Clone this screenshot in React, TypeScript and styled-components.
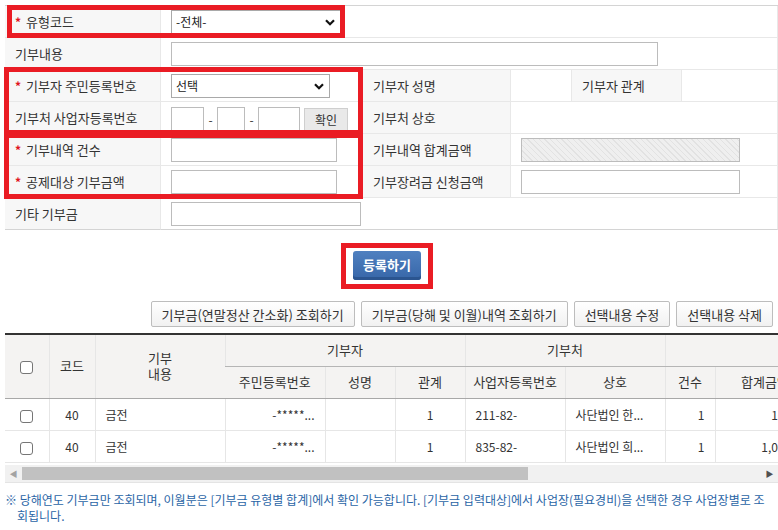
import styled, { createGlobalStyle } from 'styled-components';

const GlobalStyle = createGlobalStyle`
  html, body {
    margin: 0;
    padding: 0;
    background: #fff;
    overflow: hidden;
  }
  body {
    font-family: 'Noto Sans CJK KR', 'Noto Sans', sans-serif;
    font-size: 12px;
    color: #333;
  }
  * {
    box-sizing: border-box;
  }
`;

type Row = {
  code: string;
  kind: string;
  rrn: string;
  rel: string;
  bizNo: string;
  bizName: string;
  count: string;
  amount: string;
};

const rows: Row[] = [
  { code: '40', kind: '금전', rrn: '-*****...', rel: '1', bizNo: '211-82-', bizName: '사단법인 한...', count: '1', amount: '100,000' },
  { code: '40', kind: '금전', rrn: '-*****...', rel: '1', bizNo: '835-82-', bizName: '사단법인 희...', count: '1', amount: '1,000,000' },
];

// 그리드 컬럼 폭 (화면 밖으로 넘어가는 컬럼 포함)
const colWidths = [44, 46, 130, 100, 70, 70, 100, 100, 50, 100, 110, 210];
const tableWidth = colWidths.reduce((a, b) => a + b, 0);

function Chevron() {
  return (
    <ChevronIcon width="10" height="7" viewBox="0 0 10 7">
      <path d="M1 1.2 L5 5.2 L9 1.2" fill="none" stroke="#111" strokeWidth="2.2" />
    </ChevronIcon>
  );
}

function Select({ width, value }: { width: number; value: string }) {
  return (
    <SelectWrap width={width}>
      <SelectBox defaultValue={value}>
        <option>{value}</option>
      </SelectBox>
      <Chevron />
    </SelectWrap>
  );
}

export default function App() {
  return (
    <>
      <GlobalStyle />
      <Page>
        <FormGrid>
          <Label>
            <Req>*</Req>유형코드
          </Label>
          <Cell span={5}>
            <Select width={170} value="-전체-" />
          </Cell>

          <Label>기부내용</Label>
          <Cell span={5}>
            <TextInput width={487} />
          </Cell>

          <Label>
            <Req>*</Req>기부자 주민등록번호
          </Label>
          <Cell>
            <Select width={159} value="선택" />
          </Cell>
          <Label>기부자 성명</Label>
          <Cell />
          <Label>기부자 관계</Label>
          <Cell />

          <Label>기부처 사업자등록번호</Label>
          <Cell>
            <BizNoGroup>
              <TextInput width={33} />
              <Dash>-</Dash>
              <TextInput width={28} />
              <Dash>-</Dash>
              <TextInput width={42} />
              <ConfirmButton>확인</ConfirmButton>
            </BizNoGroup>
          </Cell>
          <Label>기부처 상호</Label>
          <Cell span={3} />

          <Label>
            <Req>*</Req>기부내역 건수
          </Label>
          <Cell>
            <TextInput width={166} />
          </Cell>
          <Label>기부내역 합계금액</Label>
          <Cell span={3}>
            <HatchedInput />
          </Cell>

          <Label>
            <Req>*</Req>공제대상 기부금액
          </Label>
          <Cell>
            <TextInput width={166} />
          </Cell>
          <Label>기부장려금 신청금액</Label>
          <Cell span={3}>
            <TextInput width={219} />
          </Cell>

          <Label last>기타 기부금</Label>
          <Cell span={5} last>
            <TextInput width={190} />
          </Cell>

          <Highlight row="1 / 2" col="1 / 3" inset="-1px 18px 0 2px" />
          <Highlight row="3 / 5" col="1 / 3" inset="-3px 0 -1px -1px" />
          <Highlight row="5 / 7" col="1 / 3" inset="-1px 0 -1px -1px" />
        </FormGrid>

        <SubmitArea>
          <SubmitFrame>
            <SubmitButton>등록하기</SubmitButton>
          </SubmitFrame>
        </SubmitArea>

        <Toolbar>
          <ToolButton>기부금(연말정산 간소화) 조회하기</ToolButton>
          <ToolButton>기부금(당해 및 이월)내역 조회하기</ToolButton>
          <ToolButton>선택내용 수정</ToolButton>
          <ToolButton>선택내용 삭제</ToolButton>
        </Toolbar>

        <GridViewport>
          <Table style={{ width: tableWidth }}>
            <colgroup>
              {colWidths.map((w, i) => (
                <col key={i} width={w} />
              ))}
            </colgroup>
            <thead>
              <tr>
                <Th rowSpan={2}>
                  <Check />
                </Th>
                <Th rowSpan={2}>코드</Th>
                <Th rowSpan={2}>
                  기부
                  <br />
                  내용
                </Th>
                <Th colSpan={3} group>
                  기부자
                </Th>
                <Th colSpan={2} group>
                  기부처
                </Th>
                <Th colSpan={4} group>
                  기부금액
                </Th>
              </tr>
              <tr>
                <Th>주민등록번호</Th>
                <Th>성명</Th>
                <Th>관계</Th>
                <Th>사업자등록번호</Th>
                <Th>상호</Th>
                <Th>건수</Th>
                <Th>합계금액</Th>
                <Th>공제대상금액</Th>
                <Th>기부장려금</Th>
              </tr>
            </thead>
            <tbody>
              {rows.map((r, i) => (
                <tr key={i}>
                  <Td align="center">
                    <Check />
                  </Td>
                  <Td align="center">{r.code}</Td>
                  <Td align="left">{r.kind}</Td>
                  <Td align="right">{r.rrn}</Td>
                  <Td align="center" />
                  <Td align="center">{r.rel}</Td>
                  <Td align="left">{r.bizNo}</Td>
                  <Td align="left">{r.bizName}</Td>
                  <Td align="right">{r.count}</Td>
                  <Td align="right" tight>
                    {r.amount}
                  </Td>
                  <Td align="right">{r.amount}</Td>
                  <Td align="right">0</Td>
                </tr>
              ))}
            </tbody>
          </Table>
        </GridViewport>

        <ScrollBar>
          <ScrollArrow>◀</ScrollArrow>
          <ScrollTrack>
            <ScrollThumb style={{ width: `${(773 / tableWidth) * 100}%` }} />
          </ScrollTrack>
          <ScrollArrow dark>▶</ScrollArrow>
        </ScrollBar>

        <Note>
          ※ 당해연도 기부금만 조회되며, 이월분은 [기부금 유형별 합계]에서 확인 가능합니다. [기부금 입력대상]에서
          사업장(필요경비)을 선택한 경우 사업장별로 조회됩니다.
        </Note>
      </Page>
    </>
  );
}

const Page = styled.div`
  padding: 5px 0 0 5px;
  width: 778px;
`;

const FormGrid = styled.div`
  position: relative;
  display: grid;
  grid-template-columns: 156px 202px 148px 61px 110px 1fr;
  grid-auto-rows: 32px;
  border-top: 1px solid #d4d4d4;
`;

const Label = styled.div<{ last?: boolean }>`
  display: flex;
  align-items: center;
  padding-left: 10px;
  background: #f7f7f7;
  border-bottom: 1px solid ${({ last }) => (last ? '#d4d4d4' : '#e8e8e8')};
  border-right: 1px solid #e8e8e8;
  color: #333;
  font-size: 13px;
  white-space: nowrap;
`;

const Req = styled.span`
  color: #e0141e;
  font-weight: bold;
  font-size: 12px;
  margin-right: 5px;
`;

const Cell = styled.div<{ span?: number; last?: boolean }>`
  grid-column: span ${({ span }) => span ?? 1};
  display: flex;
  align-items: center;
  padding-left: 10px;
  border-bottom: 1px solid ${({ last }) => (last ? '#d4d4d4' : '#e8e8e8')};
  border-right: 1px solid #e8e8e8;
`;

const Highlight = styled.div<{ row: string; col: string; inset: string }>`
  position: absolute;
  grid-row: ${({ row }) => row};
  grid-column: ${({ col }) => col};
  inset: ${({ inset }) => inset};
  border: 5px solid #ea1c24;
  pointer-events: none;
`;

const SelectWrap = styled.div<{ width: number }>`
  position: relative;
  width: ${({ width }) => width}px;
  height: 24px;
`;

const SelectBox = styled.select`
  appearance: none;
  width: 100%;
  height: 100%;
  border: 1px solid #a9a9a9;
  background: #fff;
  padding: 0 4px;
  font-family: inherit;
  font-size: 12px;
  color: #222;
`;

const ChevronIcon = styled.svg`
  position: absolute;
  right: 6px;
  top: 9px;
  pointer-events: none;
`;

const TextInput = styled.input<{ width: number }>`
  width: ${({ width }) => width}px;
  height: 24px;
  border: 1px solid #bcbcbc;
  background: #fff;
  padding: 0 4px;
  font-family: inherit;
`;

const HatchedInput = styled.div`
  width: 219px;
  height: 24px;
  border: 1px solid #bcbcbc;
  background: repeating-linear-gradient(45deg, #efefef 0 3px, #e2e2e2 3px 4px);
`;

const BizNoGroup = styled.div`
  display: flex;
  align-items: center;
  height: 26px;
  margin-top: 4px;
  & > input {
    height: 26px;
  }
`;

const Dash = styled.span`
  width: 13px;
  text-align: center;
  color: #333;
`;

const ConfirmButton = styled.button`
  margin-left: 4px;
  width: 44px;
  height: 24px;
  border: 1px solid #cfcfcf;
  background: #e9e9e9;
  font-family: inherit;
  font-size: 12px;
  color: #333;
  padding: 0;
`;

const SubmitArea = styled.div`
  display: flex;
  justify-content: center;
  padding: 13px 0 0 0;
  margin-left: -9px;
`;

const SubmitFrame = styled.div`
  border: 5px solid #ea1c24;
  padding: 3px 7px 4px 7px;
`;

const SubmitButton = styled.button`
  width: 68px;
  height: 29px;
  border: none;
  border-radius: 3px;
  background: linear-gradient(#4f80c0, #3766a8);
  box-shadow: inset 0 -3px 0 #2b5590;
  color: #fff;
  font-family: inherit;
  font-size: 13px;
  font-weight: bold;
  padding: 0 0 2px;
`;

const Toolbar = styled.div`
  display: flex;
  justify-content: flex-end;
  gap: 6px;
  padding: 12px 5px 0 0;
`;

const ToolButton = styled.button`
  height: 26px;
  padding: 0 10px;
  border: 1px solid #bdbdbd;
  border-radius: 2px;
  background: linear-gradient(#fff, #f1f1f1);
  font-family: inherit;
  font-size: 13px;
  color: #333;
`;

const GridViewport = styled.div`
  margin-top: 6px;
  width: 773px;
  overflow: hidden;
`;

const Table = styled.table`
  border-collapse: collapse;
  table-layout: fixed;
  border-top: 2px solid #333;
`;

const Th = styled.th<{ group?: boolean }>`
  height: 32px;
  padding: 0;
  background: #f4f3f2;
  font-weight: normal;
  font-size: 13px;
  color: #333;
  border-left: 1px solid #e6e6e6;
  border-bottom: 1px solid ${({ group }) => (group ? '#b5b5b5' : '#a8a8a8')};
  text-align: center;
  line-height: 16px;
  white-space: nowrap;
  overflow: hidden;
  &:first-child {
    border-left: none;
  }
`;

const Td = styled.td<{ align: 'left' | 'center' | 'right'; tight?: boolean }>`
  height: 32px;
  padding: 0 ${({ tight }) => (tight ? 0 : 10)}px 0 10px;
  border-left: 1px solid #e6e6e6;
  border-bottom: 1px solid #e6e6e6;
  text-align: ${({ align }) => align};
  font-size: 12px;
  color: #333;
  white-space: nowrap;
  overflow: hidden;
  &:first-child {
    border-left: none;
  }
`;

const Check = styled.span`
  display: inline-block;
  width: 13px;
  height: 13px;
  border: 1px solid #767676;
  border-radius: 3px;
  background: #fff;
  vertical-align: middle;
`;

const ScrollBar = styled.div`
  display: flex;
  align-items: center;
  width: 773px;
  height: 18px;
  margin-top: 2px;
  background: #f1f1f1;
  border-bottom: 1px solid #e4e4e4;
`;

const ScrollArrow = styled.span<{ dark?: boolean }>`
  width: 17px;
  text-align: center;
  font-size: 8px;
  color: ${({ dark }) => (dark ? '#505050' : '#a3a3a3')};
`;

const ScrollTrack = styled.div`
  flex: 1;
  height: 13px;
`;

const ScrollThumb = styled.div`
  height: 100%;
  background: #c1c1c1;
`;

const Note = styled.p`
  margin: 9px 0 0;
  padding-left: 12px;
  text-indent: -12px;
  width: 768px;
  font-size: 12px;
  line-height: 16px;
  color: #2a65a6;
`;
